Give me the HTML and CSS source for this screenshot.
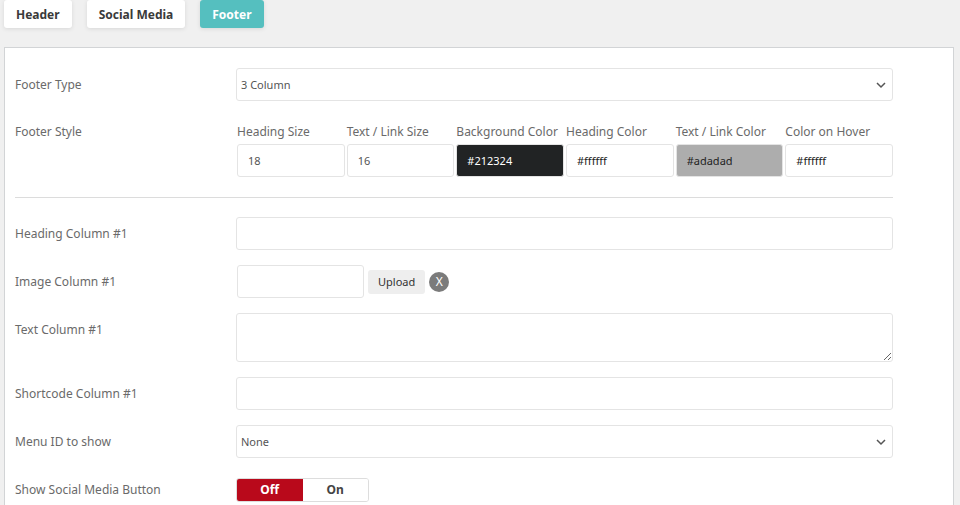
FILE: index.html
```html
<!DOCTYPE html>
<html lang="en">
<head>
<meta charset="utf-8">
<title>Footer settings</title>
<link rel="stylesheet" href="styles.css">
</head>
<body>
<nav class="tabs">
  <button type="button" class="tab">Header</button>
  <button type="button" class="tab">Social Media</button>
  <button type="button" class="tab tab-active">Footer</button>
</nav>
<main class="panel">
  <form class="form">
    <div class="row">
      <label class="label" for="footer-type">Footer Type</label>
      <div class="select-wrap">
        <select class="control" id="footer-type"><option>3 Column</option></select>
        <svg class="chevron" viewBox="0 0 10 8" aria-hidden="true"><path d="M1 2l4 4 4-4"/></svg>
      </div>
    </div>
    <div class="row row-style">
      <span class="label">Footer Style</span>
      <div class="style-grid">
        <label class="style-field">Heading Size<input class="control inset" type="text" value="18"></label>
        <label class="style-field">Text / Link Size<input class="control inset" type="text" value="16"></label>
        <label class="style-field">Background Color<input class="control inset swatch-dark" type="text" value="#212324"></label>
        <label class="style-field">Heading Color<input class="control inset swatch-white" type="text" value="#ffffff"></label>
        <label class="style-field">Text / Link Color<input class="control inset swatch-gray" type="text" value="#adadad"></label>
        <label class="style-field">Color on Hover<input class="control inset swatch-white" type="text" value="#ffffff"></label>
      </div>
    </div>
    <hr class="divider">
    <div class="row">
      <label class="label" for="heading-1">Heading Column #1</label>
      <input class="control" id="heading-1" type="text">
    </div>
    <div class="row">
      <label class="label" for="image-1">Image Column #1</label>
      <div class="upload">
        <input class="control upload-path" id="image-1" type="text">
        <button type="button" class="upload-button">Upload</button>
        <button type="button" class="clear-button">X</button>
      </div>
    </div>
    <div class="row">
      <label class="label" for="text-1">Text Column #1</label>
      <textarea class="control area" id="text-1"></textarea>
    </div>
    <div class="row">
      <label class="label" for="shortcode-1">Shortcode Column #1</label>
      <input class="control" id="shortcode-1" type="text">
    </div>
    <div class="row">
      <label class="label" for="menu-id">Menu ID to show</label>
      <div class="select-wrap">
        <select class="control" id="menu-id"><option>None</option></select>
        <svg class="chevron" viewBox="0 0 10 8" aria-hidden="true"><path d="M1 2l4 4 4-4"/></svg>
      </div>
    </div>
    <div class="row">
      <span class="label">Show Social Media Button</span>
      <div class="toggle">
        <button type="button" class="toggle-option toggle-off">Off</button>
        <button type="button" class="toggle-option">On</button>
      </div>
    </div>
  </form>
</main>
</body>
</html>
```
FILE: styles.css
```css
* {
  box-sizing: border-box;
}

body {
  display: flex;
  flex-direction: column;
  height: 100vh;
  margin: 0;
  padding: 0 6px 0 4px;
  overflow: hidden;
  background: #f0f0f0;
  color: #6a6a6a;
  font-family: "Noto Sans", sans-serif;
  font-size: 12px;
  line-height: 16px;
}

button,
input,
select,
textarea {
  margin: 0;
  font: inherit;
  color: inherit;
}

.tabs {
  display: flex;
  gap: 15px;
  margin-bottom: 19px;
}

.tab {
  height: 28px;
  padding: 1px 12px 0;
  border: 0;
  border-radius: 3px;
  background: #fff;
  box-shadow: 0 1px 4px rgba(0, 0, 0, 0.1);
  color: #3a3a3a;
  font-weight: 700;
}

.tab-active {
  background: #55bfbf;
  color: #fff;
}

.panel {
  flex: 1 0 auto;
  padding: 20px 60px 0 10px;
  border: 1px solid #d2d4d6;
  border-bottom: 0;
  background: #fff;
}

.form {
  display: flex;
  flex-direction: column;
  gap: 15px;
}

.row {
  display: grid;
  grid-template-columns: 221px minmax(0, 1fr);
  min-height: 33px;
}

.label {
  padding-top: 9px;
}

.row-style {
  margin-top: 8px;
}

.row-style .label {
  padding-top: 0;
}

.control {
  width: 100%;
  height: 33px;
  padding: 0 4px;
  border: 1px solid #e4e4e4;
  border-radius: 3px;
  background: #fff;
  color: #555;
  font-size: 11px;
}

.select-wrap {
  position: relative;
}

select.control {
  appearance: none;
}

.chevron {
  position: absolute;
  top: 13px;
  right: 7px;
  width: 10px;
  height: 8px;
  fill: none;
  stroke: #555;
  stroke-width: 1.5;
  pointer-events: none;
}

.style-grid {
  display: grid;
  grid-template-columns: repeat(6, minmax(0, 1fr));
  gap: 2px;
  padding-left: 1px;
}

.style-field {
  display: flex;
  flex-direction: column;
  gap: 4px;
  white-space: nowrap;
}

.inset {
  padding: 0 10px;
}

.swatch-dark {
  background: #212324;
  color: #fff;
}

.swatch-white {
  color: #222;
}

.swatch-gray {
  background: #adadad;
  color: #222;
}

.divider {
  width: 100%;
  height: 1px;
  margin: 5px 0 4px;
  border: 0;
  background: #dcdcdc;
}

.upload {
  display: flex;
  align-items: center;
  gap: 4px;
  padding-left: 1px;
}

.upload-path {
  width: 127px;
}

.upload-button {
  height: 24px;
  padding: 0 10px;
  border: 0;
  border-radius: 3px;
  background: #eee;
  color: #333;
  font-size: 11px;
}

.clear-button {
  width: 20px;
  height: 20px;
  padding: 0;
  border: 0;
  border-radius: 50%;
  background: #7b7b7b;
  color: #fff;
}

.area {
  display: block;
  height: 49px;
  resize: vertical;
}

.toggle {
  display: grid;
  grid-template-columns: 1fr 1fr;
  align-self: center;
  width: 133px;
  height: 24px;
  border: 1px solid #ddd;
  border-radius: 3px;
  overflow: hidden;
}

.toggle-option {
  padding: 0;
  border: 0;
  background: #fff;
  color: #444;
  font-weight: 700;
}

.toggle-off {
  background: #b9091b;
  color: #fff;
}
```
